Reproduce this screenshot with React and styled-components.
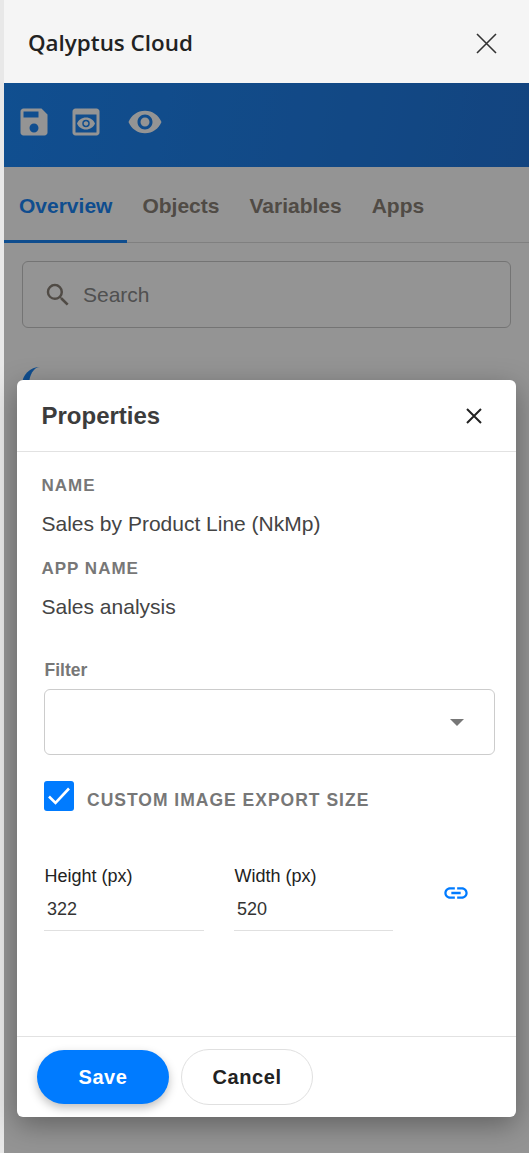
import styled, { createGlobalStyle } from "styled-components";

const GlobalStyle = createGlobalStyle`
  html, body {
    margin: 0;
    padding: 0;
    height: 100%;
    background: #e8e8e8;
    font-family: "Liberation Sans", Arial, sans-serif;
  }
  #root {
    height: 100%;
  }
`;

const Page = styled.div`
  position: relative;
  box-sizing: border-box;
  width: 529px;
  height: 1153px;
  padding-left: 4px;
  overflow: hidden;
`;

const Panel = styled.div`
  display: flex;
  flex-direction: column;
  height: 100%;
  background: #fff;
`;

const TopBar = styled.header`
  display: flex;
  align-items: center;
  justify-content: space-between;
  box-sizing: border-box;
  height: 83px;
  flex-shrink: 0;
  padding: 2px 32px 0 24px;
  background: #f5f5f5;
`;

const TopTitle = styled.h1`
  margin: 0;
  font-family: "Open Sans", sans-serif;
  font-size: 22.4px;
  font-weight: 600;
  color: #222;
`;

const PlainButton = styled.button`
  display: flex;
  padding: ${(p) => p.$pad || 0};
  border: 0;
  background: none;
  cursor: pointer;
`;

const Toolbar = styled.div`
  display: flex;
  align-items: center;
  height: 84px;
  flex-shrink: 0;
  padding: 0 0 6px 11.5px;
  box-sizing: border-box;
  background: linear-gradient(100deg, #1d88f8 0%, #1f7fe8 55%, #2176dc 100%);
`;

const ToolIcon = styled.svg`
  width: 36px;
  height: 36px;
  margin-right: ${(p) => p.$gap || 0}px;
  fill: #fff;
`;

const Tabs = styled.nav`
  display: flex;
  height: 76px;
  flex-shrink: 0;
  border-bottom: 1px solid #dcdcdc;
  box-sizing: border-box;
`;

const Tab = styled.a`
  display: flex;
  align-items: center;
  box-sizing: border-box;
  height: 76px;
  padding: 5px 15px 0;
  font-size: 21px;
  font-weight: 700;
  color: ${(p) => (p.$active ? "#1a85f5" : "#8a8178")};
  border-bottom: 3px solid ${(p) => (p.$active ? "#1a85f5" : "transparent")};
`;

const SearchBox = styled.div`
  display: flex;
  align-items: center;
  gap: 10px;
  box-sizing: border-box;
  height: 67px;
  margin: 18px 18px 0 18px;
  padding: 0 20px;
  border: 1px solid #c8c8c8;
  border-radius: 6px;
  font-size: 21px;
  color: #8a8a8a;
`;

const SearchIcon = styled.svg`
  width: 30px;
  height: 30px;
  fill: #8a8178;
`;

const Spinner = styled.span`
  display: block;
  box-sizing: border-box;
  width: 36px;
  height: 36px;
  margin: 39px 0 0 18px;
  border-left: 7px solid #1a85f5;
  border-radius: 50%;
`;

const Overlay = styled.div`
  position: absolute;
  top: 83px;
  left: 4px;
  right: 0;
  bottom: 0;
  display: flex;
  align-items: flex-start;
  justify-content: center;
  padding: 297px 13px 0;
  background: rgba(0, 0, 0, 0.42);
`;

const Modal = styled.section`
  display: flex;
  flex-direction: column;
  box-sizing: border-box;
  width: 499px;
  height: 737px;
  border-radius: 6px;
  background: #fff;
  box-shadow: 0 8px 28px rgba(0, 0, 0, 0.34);
`;

const ModalHead = styled.div`
  display: flex;
  align-items: center;
  justify-content: space-between;
  box-sizing: border-box;
  height: 72px;
  flex-shrink: 0;
  padding: 0 33px 0 24.5px;
  border-bottom: 1px solid #e2e2e2;
`;

const ModalTitle = styled.h2`
  margin: 0;
  font-size: 24px;
  font-weight: 700;
  color: #3c3c3c;
`;

const ModalBody = styled.div`
  flex: 1;
  padding: 24px 21px 0 24.5px;
`;

const FieldLabel = styled.div`
  font-size: 17px;
  line-height: 20px;
  font-weight: 700;
  letter-spacing: 1px;
  color: #777;
`;

const FieldValue = styled.div`
  margin: 16px 0 23px;
  font-size: 21px;
  line-height: 24px;
  color: #444;
`;

const FilterLabel = styled.label`
  display: block;
  margin: 41px 0 9px 3px;
  font-size: 17.5px;
  line-height: 20px;
  font-weight: 700;
  color: #777;
`;

const Select = styled.div`
  display: flex;
  align-items: center;
  justify-content: flex-end;
  box-sizing: border-box;
  height: 66px;
  margin-left: 2.5px;
  padding-right: 30px;
  border: 1px solid #ccc;
  border-radius: 6px;
`;

const Caret = styled.span`
  width: 0;
  height: 0;
  border-left: 7px solid transparent;
  border-right: 7px solid transparent;
  border-top: 7px solid #777;
`;

const CheckRow = styled.div`
  display: flex;
  align-items: center;
  gap: 13px;
  margin: 26px 0 0 2.5px;
`;

const CheckBox = styled.span`
  display: flex;
  align-items: center;
  justify-content: center;
  width: 30px;
  height: 30px;
  border-radius: 3px;
  background: #007bff;
`;

const CheckLabel = styled.span`
  padding-top: 8px;
  font-size: 17.5px;
  font-weight: 700;
  letter-spacing: 1px;
  color: #777;
`;

const SizeRow = styled.div`
  display: flex;
  align-items: flex-start;
  margin: 53px 0 0 2.5px;
`;

const SizeField = styled.div`
  display: flex;
  flex-direction: column;
  box-sizing: border-box;
  width: ${(p) => p.$width}px;
  margin-right: ${(p) => p.$gap || 0}px;
  border-bottom: 1px solid #e0e0e0;
  height: 67px;
`;

const SizeLabel = styled.span`
  margin: 2px 0 0 0.5px;
  font-size: 18px;
  line-height: 20px;
  color: #222;
`;

const SizeInput = styled.span`
  margin: 13px 0 0 3px;
  font-size: 18px;
  line-height: 20px;
  color: #333;
`;

const LinkIcon = styled.svg`
  width: 28px;
  height: 28px;
  margin: 15px 0 0 49px;
  fill: #007bff;
`;

const ModalFoot = styled.div`
  display: flex;
  align-items: center;
  gap: 12px;
  box-sizing: border-box;
  height: 81px;
  flex-shrink: 0;
  padding: 0 20px;
  border-top: 1px solid #e2e2e2;
`;

const FootButton = styled.button`
  box-sizing: border-box;
  width: 132px;
  height: ${(p) => (p.$primary ? 54 : 56)}px;
  border: ${(p) => (p.$primary ? "0" : "1px solid #e0e0e0")};
  border-radius: 28px;
  background: ${(p) => (p.$primary ? "#007bff" : "#fff")};
  color: ${(p) => (p.$primary ? "#fff" : "#222")};
  font-family: inherit;
  font-size: 20px;
  font-weight: 700;
  letter-spacing: 0.6px;
  box-shadow: ${(p) => (p.$primary ? "0 4px 10px rgba(0,0,0,.25)" : "none")};
`;

export default function App() {
  return (
    <>
      <GlobalStyle />
      <Page>
        <Panel>
          <TopBar>
            <TopTitle>Qalyptus Cloud</TopTitle>
            <PlainButton $pad="2px 0 0">
              <svg width="21" height="21" viewBox="0 0 21 21" fill="none" stroke="#333" strokeWidth="1.6">
                <path d="M1 1l19 19M20 1L1 20" />
              </svg>
            </PlainButton>
          </TopBar>
          <Toolbar>
            <ToolIcon $gap={16} viewBox="0 0 24 24">
              <path d="M17 3H5c-1.11 0-2 .9-2 2v14c0 1.1.89 2 2 2h14c1.1 0 2-.9 2-2V7l-4-4zm-5 16c-1.66 0-3-1.34-3-3s1.34-3 3-3 3 1.34 3 3-1.34 3-3 3zm3-10H5V5h10v4z" />
            </ToolIcon>
            <ToolIcon $gap={23} viewBox="0 0 24 24">
              <path d="M19 3H5c-1.11 0-2 .9-2 2v14c0 1.1.89 2 2 2h14c1.1 0 2-.9 2-2V5c0-1.1-.89-2-2-2zm0 16H5V7h14v12z" />
              <path d="M13.5 13c0 .83-.67 1.5-1.5 1.5s-1.5-.67-1.5-1.5.67-1.5 1.5-1.5 1.5.67 1.5 1.5zM12 9c-2.73 0-5.06 1.66-6 4 .94 2.34 3.27 4 6 4s5.06-1.66 6-4c-.94-2.34-3.27-4-6-4zm0 6.5a2.5 2.5 0 010-5 2.5 2.5 0 010 5z" />
            </ToolIcon>
            <ToolIcon viewBox="0 0 24 24">
              <path d="M12 4.5C7 4.5 2.73 7.61 1 12c1.73 4.39 6 7.5 11 7.5s9.27-3.11 11-7.5c-1.73-4.39-6-7.5-11-7.5zM12 17c-2.76 0-5-2.24-5-5s2.24-5 5-5 5 2.24 5 5-2.24 5-5 5zm0-8c-1.66 0-3 1.34-3 3s1.34 3 3 3 3-1.34 3-3-1.34-3-3-3z" />
            </ToolIcon>
          </Toolbar>
          <Tabs>
            <Tab $active>Overview</Tab>
            <Tab>Objects</Tab>
            <Tab>Variables</Tab>
            <Tab>Apps</Tab>
          </Tabs>
          <SearchBox>
            <SearchIcon viewBox="0 0 24 24">
              <path d="M15.5 14h-.79l-.28-.27A6.47 6.47 0 0016 9.5 6.5 6.5 0 109.5 16c1.61 0 3.09-.59 4.23-1.57l.27.28v.79l5 4.99L20.49 19l-4.99-5zm-6 0C7.01 14 5 11.99 5 9.5S7.01 5 9.5 5 14 7.01 14 9.5 11.99 14 9.5 14z" />
            </SearchIcon>
            Search
          </SearchBox>
          <Spinner />
        </Panel>
        <Overlay>
          <Modal>
            <ModalHead>
              <ModalTitle>Properties</ModalTitle>
              <PlainButton>
                <svg width="18" height="18" viewBox="0 0 18 18" fill="none" stroke="#222" strokeWidth="2">
                  <path d="M2 2l14 14M16 2L2 16" />
                </svg>
              </PlainButton>
            </ModalHead>
            <ModalBody>
              <FieldLabel>NAME</FieldLabel>
              <FieldValue>Sales by Product Line (NkMp)</FieldValue>
              <FieldLabel>APP NAME</FieldLabel>
              <FieldValue>Sales analysis</FieldValue>
              <FilterLabel>Filter</FilterLabel>
              <Select>
                <Caret />
              </Select>
              <CheckRow>
                <CheckBox>
                  <svg width="22" height="22" viewBox="0 0 22 22" fill="none" stroke="#fff" strokeWidth="2.6">
                    <path d="M1 11.5l6.5 6.5L21 3.5" />
                  </svg>
                </CheckBox>
                <CheckLabel>CUSTOM IMAGE EXPORT SIZE</CheckLabel>
              </CheckRow>
              <SizeRow>
                <SizeField $width={160} $gap={30}>
                  <SizeLabel>Height (px)</SizeLabel>
                  <SizeInput>322</SizeInput>
                </SizeField>
                <SizeField $width={159}>
                  <SizeLabel>Width (px)</SizeLabel>
                  <SizeInput>520</SizeInput>
                </SizeField>
                <LinkIcon viewBox="0 0 24 24">
                  <path d="M3.9 12c0-1.71 1.39-3.1 3.1-3.1h4V7H7c-2.76 0-5 2.24-5 5s2.24 5 5 5h4v-1.9H7c-1.71 0-3.1-1.39-3.1-3.1zM8 13h8v-2H8v2zm9-6h-4v1.9h4c1.71 0 3.1 1.39 3.1 3.1s-1.39 3.1-3.1 3.1h-4V17h4c2.76 0 5-2.24 5-5s-2.24-5-5-5z" />
                </LinkIcon>
              </SizeRow>
            </ModalBody>
            <ModalFoot>
              <FootButton $primary>Save</FootButton>
              <FootButton>Cancel</FootButton>
            </ModalFoot>
          </Modal>
        </Overlay>
      </Page>
    </>
  );
}
